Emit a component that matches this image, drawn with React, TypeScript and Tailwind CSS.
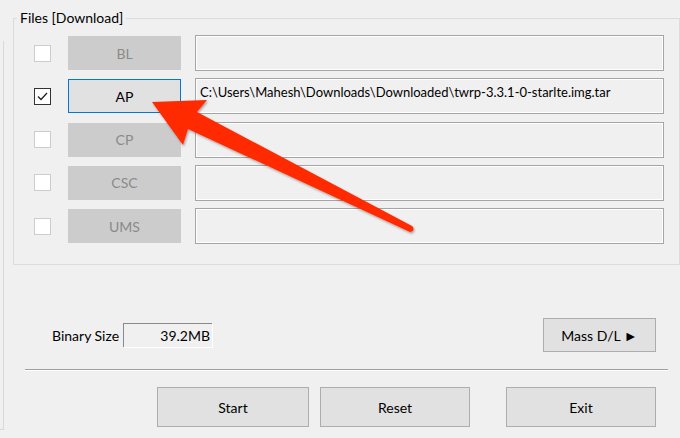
import React from 'react'

const font = { fontFamily: 'Lato, "Noto Sans", "Liberation Sans", sans-serif' }

type Row = { label: string; enabled?: boolean; checked?: boolean; path?: string }

const rows: Row[] = [
  { label: 'BL' },
  { label: 'AP', enabled: true, checked: true, path: 'C:\\Users\\Mahesh\\Downloads\\Downloaded\\twrp-3.3.1-0-starlte.img.tar' },
  { label: 'CP' },
  { label: 'CSC' },
  { label: 'UMS' },
]

function Checkbox({ checked }: { checked?: boolean }) {
  return (
    <div
      className={`flex h-[17px] w-[17px] shrink-0 items-center justify-center border bg-white ${
        checked ? 'border-[#333333]' : 'border-[#cccccc]'
      }`}
    >
      {checked && (
        <svg width="13" height="13" viewBox="0 0 13 13">
          <path d="M2 6.5 L5 9.5 L11 3" fill="none" stroke="#222" strokeWidth="1.3" />
        </svg>
      )}
    </div>
  )
}

function WinButton({ children, className = '' }: { children: React.ReactNode; className?: string }) {
  return (
    <div
      className={`flex items-center justify-center border border-[#adadad] bg-[#e1e1e1] text-[14px] text-black ${className}`}
    >
      {children}
    </div>
  )
}

export default function App() {
  return (
    <div className="relative flex h-[438px] w-[680px] overflow-hidden bg-[#f0f0f0]" style={font}>
      {/* edge of the neighbouring panel */}
      <div className="mt-[41px] h-[389px] w-[4px] shrink-0 border-b border-r border-[#d9d9d9]" />

      <div className="flex w-[676px] flex-col">
        <fieldset className="ml-[9px] mt-[11px] h-[254px] w-[667px] border border-[#dcdcdc] pt-[11px]">
          <legend className="ml-[3px] px-[3px] text-[14px] leading-[14px] text-black">Files [Download]</legend>
          <div className="flex flex-col gap-[9.3px] pl-[20px]">
            {rows.map((row) => (
              <div key={row.label} className="flex h-[34px] items-center">
                <Checkbox checked={row.checked} />
                <div
                  className={`ml-[17px] flex h-[34px] w-[113px] shrink-0 items-center justify-center border text-[14px] ${
                    row.enabled
                      ? 'border-[#0078d7] bg-[#e1e1e1] text-black'
                      : 'border-[#cccccc] bg-[#cccccc] text-[#8a8a8a]'
                  }`}
                >
                  {row.label}
                </div>
                <div className="ml-[14px] h-[36px] w-[469px] shrink-0 overflow-hidden whitespace-nowrap border border-[#a5a5a5] bg-[#f0f0f0] px-[4px] pt-[3px] text-[13px] leading-[20px] text-black shadow-[inset_1px_1px_0_#ffffff,inset_-1px_-1px_0_#ffffff]">
                  {row.path}
                </div>
              </div>
            ))}
          </div>
        </fieldset>

        <div className="mt-[53px] flex h-[34px] items-center pr-[24px]">
          <span className="ml-[48px] w-[71px] whitespace-nowrap text-[14px] text-black">Binary Size</span>
          <div className="flex h-[24px] w-[89px] items-center justify-end border-l border-t border-[#8a8a8a] pr-[2px] text-[14px] text-black shadow-[1px_1px_0_#ffffff]">
            39.2MB
          </div>
          <WinButton className="ml-auto h-[34px] w-[113px] text-[13.5px]">Mass D/L ►</WinButton>
        </div>

        <div className="ml-[21px] mt-[17px] w-[643px] border-b border-t border-b-white border-t-[#a0a0a0]" />

        <div className="mt-[16px] flex">
          <WinButton className="ml-[153px] h-[40px] w-[152px]">Start</WinButton>
          <WinButton className="ml-[11px] h-[40px] w-[150px]">Reset</WinButton>
          <WinButton className="ml-[36px] h-[40px] w-[150px]">Exit</WinButton>
        </div>
      </div>

      {/* red annotation arrow */}
      <svg className="pointer-events-none absolute left-0 top-0" width="680" height="438" viewBox="0 0 680 438">
        <defs>
          <filter id="sh" x="-10%" y="-10%" width="120%" height="120%">
            <feDropShadow dx="1" dy="1.5" stdDeviation="1.2" floodColor="#000" floodOpacity="0.35" />
          </filter>
        </defs>
        <path
          d="M152 102 L207 100 L197 112 L412 226 Q416 230 410 232 L188 129 L183 145 Z"
          fill="#ff2a00"
          filter="url(#sh)"
        />
      </svg>
    </div>
  )
}
